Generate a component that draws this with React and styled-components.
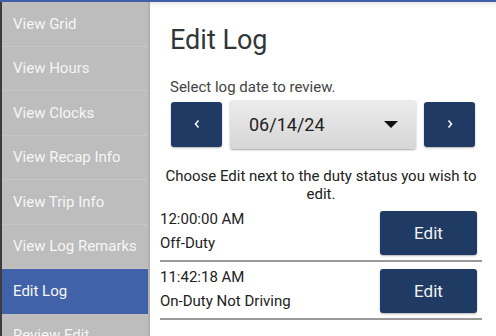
import React from "react";
import styled, { createGlobalStyle } from "styled-components";

const Global = createGlobalStyle`
  html, body, #root { margin: 0; padding: 0; height: 100%; }
  body { font-family: Roboto, "Noto Sans", "Liberation Sans", sans-serif; overflow: hidden; background: #fff; }
  * { box-sizing: border-box; }
`;

const Page = styled.div`
  display: flex;
  flex-direction: column;
  width: 496px;
  height: 336px;
  overflow: hidden;
`;

const TopLine = styled.div`
  height: 2px;
  flex: none;
  background: #3f5fa6;
`;

const Body = styled.div`
  flex: 1;
  display: flex;
  min-height: 0;
`;

const Sidebar = styled.nav`
  width: 150px;
  flex: none;
  background: #bdbdbd;
  border-left: 2px solid #3c3c3c;
  border-right: 2px solid #b0b0b0;
  display: flex;
  flex-direction: column;
`;

const NavItem = styled.div`
  height: 44.5px;
  flex: none;
  display: flex;
  align-items: center;
  padding-left: 11px;
  font-size: 15px;
  color: #f6f6f6;
  background: ${(p) => (p.$active ? "#4162a8" : "transparent")};
  border-bottom: 1px solid ${(p) => (p.$active ? "#4162a8" : "#c6c6c6")};
  white-space: nowrap;
`;

const Main = styled.main`
  flex: 1;
  min-width: 0;
  background: #fff;
  box-shadow: inset 0 7px 7px -7px rgba(0, 0, 0, 0.18);
  padding: 0 14px 0 10px;
  display: flex;
  flex-direction: column;
`;

const Header = styled.div`
  padding: 0 5px 0 10px;
`;

const Title = styled.h1`
  margin: 20px 0 0;
  font-size: 27px;
  font-weight: 400;
  line-height: 36px;
  color: #333638;
`;

const Label = styled.div`
  margin-top: 19px;
  font-size: 15px;
  line-height: 20px;
  color: #444;
`;

const DateRow = styled.div`
  display: flex;
  align-items: center;
  gap: 8px;
  margin-top: 2px;
  height: 50px;
  padding-left: 1px;
`;

const NavButton = styled.button`
  width: 51px;
  height: 45px;
  border: none;
  border-radius: 3px;
  background: #1f3b64;
  color: #fff;
  box-shadow: 0 1px 2px rgba(0, 0, 0, 0.3);
  display: flex;
  align-items: center;
  justify-content: center;
  padding: 0;
  font-family: inherit;
`;

const DateSelect = styled.div`
  width: 186px;
  height: 49px;
  border-radius: 3px;
  background: linear-gradient(#ececec, #d6d6d6);
  box-shadow: 0 1px 2px rgba(0, 0, 0, 0.35);
  display: flex;
  align-items: center;
  justify-content: space-between;
  padding: 0 18px 0 19px;
  font-size: 18px;
  color: #222;
`;

const Caret = styled.span`
  width: 0;
  height: 0;
  border-left: 7px solid transparent;
  border-right: 7px solid transparent;
  border-top: 7px solid #111;
`;

const Instructions = styled.p`
  margin: 18px 0 0;
  text-align: center;
  font-size: 15px;
  line-height: 18px;
  color: #222;
`;

const Rows = styled.div`
  margin-top: 1px;
`;

const Row = styled.div`
  display: flex;
  align-items: flex-start;
  justify-content: space-between;
  height: 58px;
  padding: 5px 5px 0 0;
  border-bottom: 2px solid #9a9a9a;
`;

const RowText = styled.div`
  display: flex;
  flex-direction: column;
  gap: 4px;
  font-size: 15px;
  line-height: 20px;
  color: #222;
`;

const EditButton = styled.button`
  margin-top: 2px;
  width: 97px;
  height: 44px;
  border: none;
  border-radius: 3px;
  background: #1f3b64;
  color: #f2f2f2;
  font-size: 17px;
  font-family: inherit;
  box-shadow: 0 1px 2px rgba(0, 0, 0, 0.3);
`;

const navItems = [
  "View Grid",
  "View Hours",
  "View Clocks",
  "View Recap Info",
  "View Trip Info",
  "View Log Remarks",
  "Edit Log",
  "Review Edit",
];

const entries = [
  { time: "12:00:00 AM", status: "Off-Duty" },
  { time: "11:42:18 AM", status: "On-Duty Not Driving" },
];

const Chevron = ({ dir }) => (
  <svg width="8" height="10" viewBox="0 0 8 10">
    <path
      d={dir === "left" ? "M5.5 1.5 L2.5 5 L5.5 8.5" : "M2.5 1.5 L5.5 5 L2.5 8.5"}
      fill="none"
      stroke="#fff"
      strokeWidth="1.5"
    />
  </svg>
);

export default function App() {
  return (
    <Page>
      <Global />
      <TopLine />
      <Body>
        <Sidebar>
          {navItems.map((n) => (
            <NavItem key={n} $active={n === "Edit Log"}>
              {n}
            </NavItem>
          ))}
        </Sidebar>
        <Main>
          <Header>
            <Title>Edit Log</Title>
            <Label>Select log date to review.</Label>
            <DateRow>
              <NavButton aria-label="previous">
                <Chevron dir="left" />
              </NavButton>
              <DateSelect>
                <span>06/14/24</span>
                <Caret />
              </DateSelect>
              <NavButton aria-label="next">
                <Chevron dir="right" />
              </NavButton>
            </DateRow>
          </Header>
          <Instructions>Choose Edit next to the duty status you wish to edit.</Instructions>
          <Rows>
            {entries.map((e) => (
              <Row key={e.time}>
                <RowText>
                  <span>{e.time}</span>
                  <span>{e.status}</span>
                </RowText>
                <EditButton>Edit</EditButton>
              </Row>
            ))}
          </Rows>
        </Main>
      </Body>
    </Page>
  );
}
